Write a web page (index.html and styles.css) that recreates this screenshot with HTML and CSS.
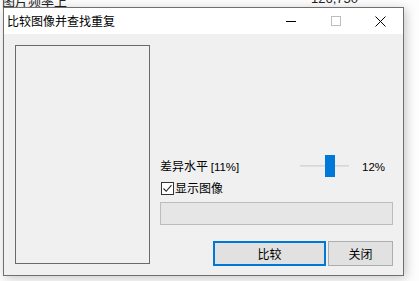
FILE: index.html
```html
<!DOCTYPE html>
<html lang="zh">
<head>
<meta charset="utf-8">
<link rel="stylesheet" href="styles.css">
</head>
<body>
<div class="desktop">
  <div class="bg-text bg-left">图片频率上</div>
  <div class="bg-text bg-right">126,750</div>
  <div class="window">
    <div class="titlebar">
      <span class="title">比较图像并查找重复</span>
      <div class="controls">
        <span class="ctl"><svg width="10" height="10" viewBox="0 0 10 10"><path d="M0 5.5H10" stroke="#000" stroke-width="1"/></svg></span>
        <span class="ctl"><svg width="10" height="10" viewBox="0 0 10 10"><rect x="0.5" y="0.5" width="9" height="9" fill="none" stroke="#bdbdbd" stroke-width="1"/></svg></span>
        <span class="ctl"><svg width="11" height="11" viewBox="0 0 11 11"><path d="M0.5 0.5L10.5 10.5M10.5 0.5L0.5 10.5" stroke="#000" stroke-width="1"/></svg></span>
      </div>
    </div>
    <div class="body">
      <div class="imagebox"></div>
      <div class="panel">
        <div class="row-level">
          <span class="label">差异水平 <span class="latin">[11%]</span></span>
          <div class="slider">
            <div class="track"></div>
            <div class="thumb"></div>
          </div>
          <span class="pct latin">12%</span>
        </div>
        <label class="row-check">
          <span class="checkbox"><svg width="11" height="11" viewBox="0 0 11 11"><path d="M1.5 5.5L4.2 8.3L9.5 2.2" fill="none" stroke="#222" stroke-width="1.1"/></svg></span>
          <span>显示图像</span>
        </label>
        <div class="progress"></div>
        <div class="buttons">
          <button class="btn btn-default">比较</button>
          <button class="btn btn-close">关闭</button>
        </div>
      </div>
    </div>
  </div>
</div>
</body>
</html>
```
FILE: styles.css
```css
* { box-sizing: border-box; }
html, body { margin: 0; padding: 0; }
body {
  width: 419px;
  height: 281px;
  overflow: hidden;
  background: #ffffff;
  font-family: "Noto Sans CJK SC", "Liberation Sans", sans-serif;
  font-size: 12px;
  color: #000;
}
.desktop {
  position: relative;
  width: 419px;
  height: 281px;
  overflow: hidden;
  background: #fdfdfd;
}
.bg-text {
  position: absolute;
  top: -9px;
  font-size: 13px;
  color: #222;
  white-space: nowrap;
}
.bg-left { left: 2px; }
.bg-right { left: 311px; font-family: "Liberation Sans", sans-serif; }
.window {
  position: absolute;
  left: 3px;
  top: 7px;
  width: 401px;
  height: 269px;
  border: 1px solid #6f6f6f;
  background: #f0f0f0;
  box-shadow: 2px 2px 10px rgba(0,0,0,0.22);
  display: flex;
  flex-direction: column;
}
.titlebar {
  height: 26px;
  background: #ffffff;
  display: flex;
  align-items: center;
  justify-content: space-between;
}
.title {
  padding-left: 3px;
  font-size: 12px;
  line-height: 16px;
  margin-top: -1px;
}
.controls {
  display: flex;
  height: 26px;
}
.ctl {
  width: 45px;
  display: flex;
  align-items: center;
  justify-content: center;
}
.ctl:nth-child(1) { width: 44px; }
.body {
  flex: 1;
  display: flex;
  padding: 11px 10px 10px 11px;
  gap: 10px;
}
.imagebox {
  width: 135px;
  height: 219px;
  border: 1px solid #6a6a6a;
  background: #f0f0f0;
}
.panel {
  width: 233px;
  display: flex;
  flex-direction: column;
  padding-top: 110px;
}
.latin { font-family: "Liberation Sans", sans-serif; font-size: 11.5px; }
.row-level {
  height: 23px;
  display: flex;
  align-items: center;
  position: relative;
}
.label { width: 140px; line-height: 16px; }
.slider {
  position: relative;
  width: 49px;
  height: 23px;
}
.track {
  position: absolute;
  left: 0;
  right: 0;
  top: 10px;
  height: 2px;
  background: #e0e0e0;
  border-top: 1px solid #d6d6d6;
}
.thumb {
  position: absolute;
  left: 25px;
  top: 0;
  width: 10px;
  height: 22px;
  background: #0078d7;
}
.pct { margin-left: 13px; }
.row-check {
  margin-top: 2px;
  height: 16px;
  display: flex;
  align-items: center;
  gap: 1px;
  line-height: 16px;
}
.checkbox {
  width: 13px;
  height: 13px;
  border: 1px solid #333;
  background: #fff;
  display: flex;
  align-items: center;
  justify-content: center;
  margin-left: 1px;
}
.progress {
  margin-top: 6px;
  height: 23px;
  border: 1px solid #bcbcbc;
  background: #e6e6e6;
}
.buttons {
  margin-top: 16px;
  display: flex;
  justify-content: flex-end;
  gap: 2px;
}
.btn {
  font-family: "Noto Sans CJK SC", sans-serif;
  font-size: 12px;
  height: 25px;
  padding: 0;
  background: #e1e1e1;
  color: #000;
  line-height: 16px;
}
.btn-default {
  width: 113px;
  border: 2px solid #0078d7;
}
.btn-close {
  width: 65px;
  border: 1px solid #adadad;
}
```
